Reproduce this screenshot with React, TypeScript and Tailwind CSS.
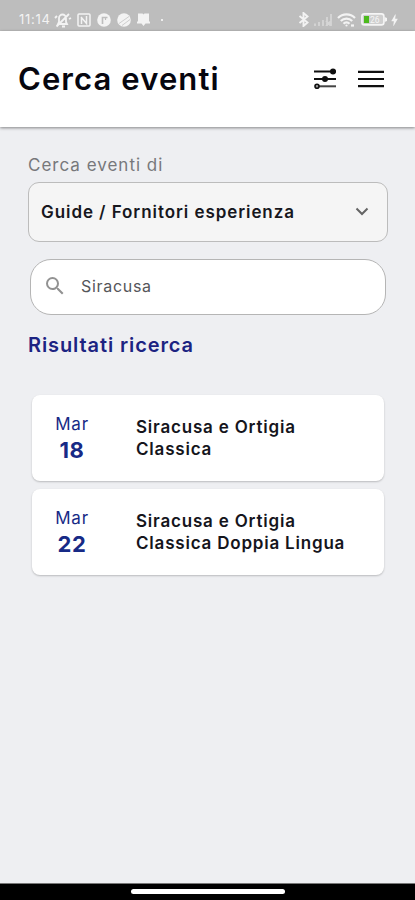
import { MdBolt, MdSearch } from "react-icons/md";

type EventItem = {
    month: string;
    day: string;
    title: string[];
};

const events: EventItem[] = [
    { month: "Mar", day: "18", title: ["Siracusa e Ortigia", "Classica"] },
    { month: "Mar", day: "22", title: ["Siracusa e Ortigia", "Classica Doppia Lingua"] },
];

function StatusBar() {
    return (
        <div className="h-[31px] shrink-0 bg-[#bdbdbd] pl-[19px] pr-[14px] pt-[8px] flex items-center justify-between text-[#f3f3f3]">
            <div className="flex items-center">
                <span className="w-[35px] text-[13px] tracking-[0.7px] whitespace-nowrap">11:14</span>
                {/* Muted bell */}
                <svg className="w-[18px] h-[16px]" viewBox="0 0 18 16" fill="none" stroke="currentColor" strokeWidth="1.8">
                    <path d="M4 12h9l-1-2V6a3.500 3.500 0 0 0-7 0v4zM2.500 14.500L15 2M1 6l2-2M15 7l2-1M8 14.500h3" />
                </svg>
                <div className="flex items-center gap-[6px] ml-[5px]">
                    <svg className="w-[14px] h-[14px]" viewBox="0 0 14 14" fill="none" stroke="currentColor" strokeWidth="1.500">
                        <rect x="1" y="1" width="12" height="12" rx="1" />
                        <path d="M4.500 11V4.500M4 4l5.500 6.500V3" />
                    </svg>
                    <svg className="w-[14px] h-[14px]" viewBox="0 0 14 14">
                        <circle cx="7" cy="7" r="6.800" fill="currentColor" />
                        <path d="M5.500 11V4.500h5" fill="none" stroke="#bdbdbd" strokeWidth="1.600" />
                        <path d="M8.500 4.500v2.500" stroke="#bdbdbd" strokeWidth="1.200" />
                    </svg>
                    <svg className="w-[14px] h-[14px]" viewBox="0 0 14 14">
                        <circle cx="7" cy="7" r="6.800" fill="currentColor" />
                        <path d="M2 10.500L12 3.500M5 12.500l8-6" stroke="#c8c8c8" strokeWidth="0.9" />
                    </svg>
                    <svg className="w-[13px] h-[14px]" viewBox="0 0 13 14" fill="currentColor">
                        <path d="M1 0.500h4.500l1 1 1-1H12v8h1v2H8.500L6.500 13l-2-2.500H0v-2h1z" />
                    </svg>
                </div>
                <span className="ml-[11px] w-[2px] h-[2px] rounded-full bg-white" />
            </div>

            <div className="flex items-center">
                {/* Bluetooth */}
                <svg className="w-[12px] h-[15px]" viewBox="0 0 12 15" fill="none" stroke="currentColor" strokeWidth="1.900">
                    <path d="M1.500 4l8 6.500-4 3.500V1l4 3.500-8 6.500" />
                </svg>
                <svg className="w-[19px] h-[12px] ml-[4px] opacity-45" viewBox="0 0 19 12" stroke="currentColor" strokeWidth="1.800">
                    <path d="M1 12V9.500M5 12V8M9 12V6M13 12V3M17 12V0M12 7l5 5M17 7l-5 5" />
                </svg>
                {/* Wi-Fi */}
                <svg className="w-[19px] h-[14px] ml-[4px]" viewBox="0 0 19 14" fill="none" stroke="currentColor" strokeWidth="2.200">
                    <path d="M1 5a12 12 0 0 1 17 0M3.800 8a8 8 0 0 1 11.400 0M6.500 10.700a4.200 4.200 0 0 1 6 0" />
                    <circle cx="9.500" cy="12.500" r="1.100" fill="currentColor" stroke="none" />
                    <path d="M14 12.500h3" />
                </svg>
                <svg className="w-[26px] h-[13px] ml-[5px]" viewBox="0 0 26 13">
                    <rect x="0.900" y="0.900" width="22" height="11" rx="2.500" fill="#cfcfcf" stroke="#f5f5f5" strokeWidth="1.600" />
                    <path d="M23.500 4l2.500 1v3l-2.500 1z" fill="#f5f5f5" />
                    <rect x="3" y="3" width="5" height="7" fill="#4cba1c" />
                    <text x="9" y="9.800" fontSize="8.500" fill="#f5f5f5" fontFamily="Roboto, sans-serif">26</text>
                </svg>
                <MdBolt className="w-[15px] h-[16px] -mr-[1px]" />
            </div>
        </div>
    );
}

function Header() {
    return (
        <header className="relative h-[96px] shrink-0 bg-white pl-[18px] pr-[31px] flex items-center justify-between shadow-[0_1px_3px_rgba(0,0,0,0.45)]">
            <h1 className="text-[31px] font-semibold tracking-[1.1px] text-[#06060f] whitespace-nowrap">Cerca eventi</h1>
            <div className="flex items-center gap-[21px]">
                <svg className="w-[24px] h-[22px]" viewBox="0 0 24 22" stroke="#101010" strokeWidth="2">
                    <path d="M1 3.500h22M1 11h22" />
                    <path d="M4 18.300h19" stroke="#444" />
                    <circle cx="20" cy="3.500" r="2" fill="#101010" />
                    <circle cx="12" cy="11" r="2" fill="#101010" />
                    <circle cx="4" cy="18.300" r="2" fill="#999" strokeWidth="1.600" />
                </svg>
                <svg className="w-[26px] h-[22px]" viewBox="0 0 26 22" stroke="#101010" strokeWidth="2.200">
                    <path d="M0 3.800h26M0 11h26M0 18.200h26" />
                </svg>
            </div>
        </header>
    );
}

function EventCard({ event }: { event: EventItem }) {
    return (
        <div className="h-[86px] bg-white rounded-lg flex items-center shadow-[0_1px_2px_rgba(0,0,0,0.22)]">
            <div className="w-[80px] pb-[2px] flex flex-col items-center text-[#172a86]">
                <span className="text-[17px] leading-[26px] tracking-[0.8px]">{event.month}</span>
                <span className="text-[22px] leading-[26px] font-bold tracking-[0.6px]">{event.day}</span>
            </div>
            <div className="ml-[24px] text-[17px] leading-[22px] font-semibold tracking-[0.8px] text-[#15151c] whitespace-nowrap">
                {event.title.map((line) => (
                    <p key={line}>{line}</p>
                ))}
            </div>
        </div>
    );
}

export default function App() {
    return (
        <div className="w-full h-[900px] bg-[#eeeff2] flex flex-col overflow-hidden font-['Inter',sans-serif]">
            <StatusBar />
            <Header />

            <main className="flex-1 px-[28px] pt-[26px]">
                <label className="block text-[17px] leading-[24px] tracking-[1px] text-[#77787b]">Cerca eventi di</label>
                <div className="mt-[5px] w-[360px] h-[60px] rounded-[11px] border border-[#bcbcbc] bg-[#f5f5f5] pl-[12px] pr-[18px] flex items-center justify-between">
                    <span className="text-[17px] leading-[24px] font-semibold tracking-[0.93px] text-[#17171d] whitespace-nowrap">Guide / Fornitori esperienza</span>
                    <svg className="w-[14px] h-[14px]" viewBox="0 0 14 14" fill="none" stroke="#646464" strokeWidth="2">
                        <path d="M1.500 3.500L7 9l5.500-5.500" />
                    </svg>
                </div>

                <div className="mt-[17px] ml-[2px] w-[356px] h-[56px] rounded-[21px] border border-[#b5b5b5] bg-white pl-[12px] pb-[2px] flex items-center">
                    <MdSearch className="w-[24px] h-[24px] text-[#929292]" />
                    <span className="ml-[14px] text-[16px] tracking-[0.7px] text-[#55565a]">Siracusa</span>
                </div>

                <h2 className="mt-[17px] text-[20px] leading-[26px] font-semibold tracking-[0.9px] text-[#1c2382]">Risultati ricerca</h2>

                <div className="mt-[37px] ml-[4px] w-[352px] flex flex-col gap-[8px]">
                    {events.map((event) => (
                        <EventCard key={event.day} event={event} />
                    ))}
                </div>
            </main>

            <div className="h-[17px] shrink-0 bg-black border-t border-[#777] pt-[5px] flex justify-center">
                <div className="w-[154px] h-[5px] rounded-full bg-white" />
            </div>
        </div>
    );
}
